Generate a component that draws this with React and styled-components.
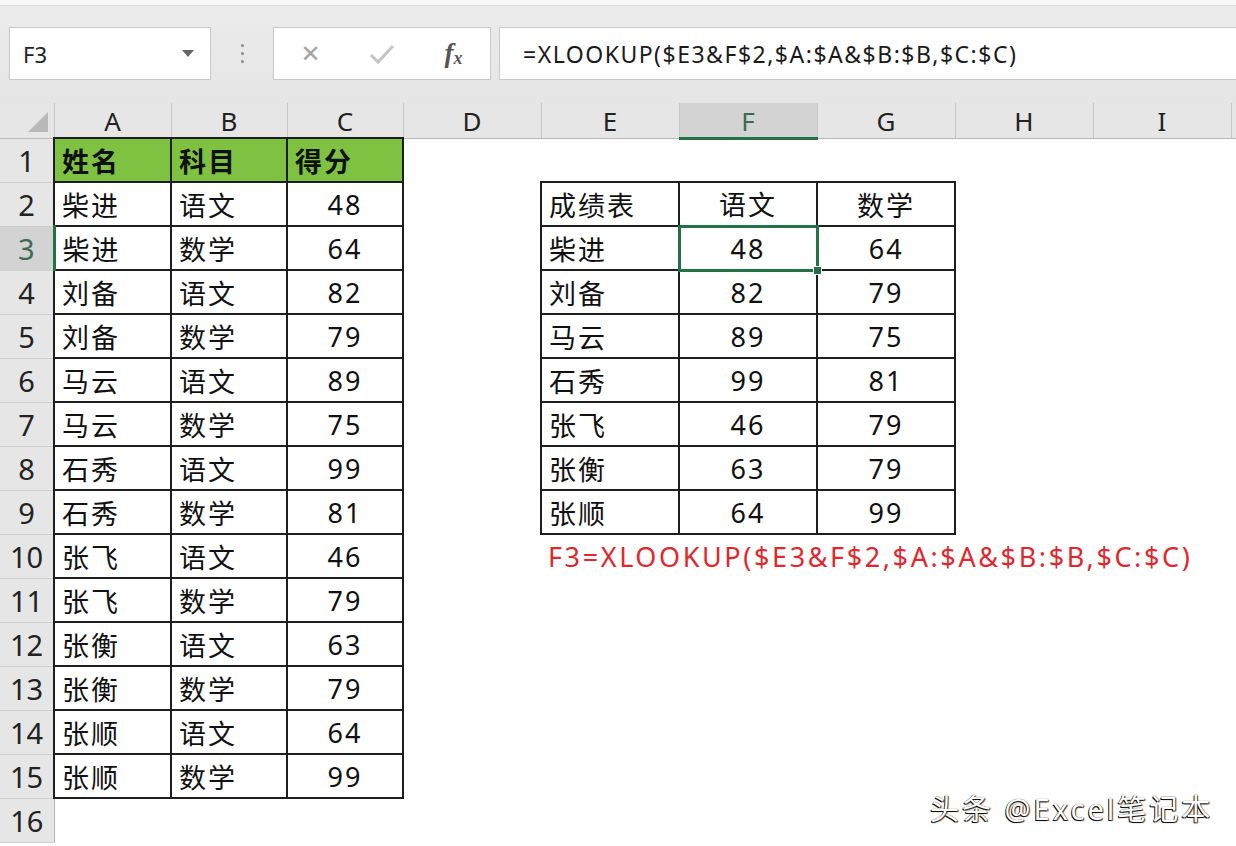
import React from 'react';
import styled, { createGlobalStyle } from 'styled-components';

const GlobalStyle = createGlobalStyle`
  html, body {
    margin: 0;
    padding: 0;
    background: #fff;
  }
  body {
    font-family: "Noto Sans", "Noto Sans CJK SC", sans-serif;
    overflow: hidden;
  }
`;

const GREEN = '#217346';

const columns = [
    { key: 'A', w: 117 },
    { key: 'B', w: 116 },
    { key: 'C', w: 116 },
    { key: 'D', w: 138 },
    { key: 'E', w: 138 },
    { key: 'F', w: 138 },
    { key: 'G', w: 138 },
    { key: 'H', w: 138 },
    { key: 'I', w: 138 },
    { key: '', w: 5 },
];

//left table A1:C15
const scores = [
    ['姓名', '科目', '得分'],
    ['柴进', '语文', 48],
    ['柴进', '数学', 64],
    ['刘备', '语文', 82],
    ['刘备', '数学', 79],
    ['马云', '语文', 89],
    ['马云', '数学', 75],
    ['石秀', '语文', 99],
    ['石秀', '数学', 81],
    ['张飞', '语文', 46],
    ['张飞', '数学', 79],
    ['张衡', '语文', 63],
    ['张衡', '数学', 79],
    ['张顺', '语文', 64],
    ['张顺', '数学', 99],
];

//right table E2:G9
const report = [
    ['成绩表', '语文', '数学'],
    ['柴进', 48, 64],
    ['刘备', 82, 79],
    ['马云', 89, 75],
    ['石秀', 99, 81],
    ['张飞', 46, 79],
    ['张衡', 63, 79],
    ['张顺', 64, 99],
];

const formula = '=XLOOKUP($E3&F$2,$A:$A&$B:$B,$C:$C)';

const App = () => {
    const rows = [];
    for (let r = 1; r <= 16; r++) {
        const cells = [];
        // A..C
        const left = scores[r - 1];
        for (let c = 0; c < 3; c++) {
            if (left) {
                cells.push(
                    <Cell key={'l' + c} $boxed $head={r === 1} $align={c === 2 && r > 1 ? 'center' : 'left'}>
                        {left[c]}
                    </Cell>
                );
            } else {
                cells.push(<Cell key={'l' + c} />);
            }
        }
        // D
        cells.push(<Cell key="d" />);
        // E..G
        const right = r >= 2 ? report[r - 2] : null;
        for (let c = 0; c < 3; c++) {
            if (right) {
                const selected = r === 3 && c === 1;
                cells.push(
                    <Cell key={'r' + c} $boxed $selected={selected} $align={c === 0 ? 'left' : 'center'}>
                        {right[c]}
                        {selected && <FillHandle />}
                    </Cell>
                );
            } else if (r === 10 && c === 0) {
                cells.push(<Note key="note">F3{formula}</Note>);
            } else {
                cells.push(<Cell key={'r' + c} />);
            }
        }
        // H, I, rest
        cells.push(<Cell key="h" />);
        cells.push(<Cell key="i" />);
        cells.push(<Cell key="j" />);

        rows.push(
            <Row key={r}>
                <RowHead $active={r === 3}>{r}</RowHead>
                {cells}
            </Row>
        );
    }

    return (
        <Page>
            <GlobalStyle />
            <Toolbar>
                <NameBox>
                    <span>F3</span>
                    <Caret />
                </NameBox>
                <Grip>
                    <i /><i /><i />
                </Grip>
                <FxBox>
                    <Cancel>✕</Cancel>
                    <Enter>
                        <svg width="26" height="22" viewBox="0 0 26 22">
                            <path d="M2 12 L9 19 L24 3" fill="none" stroke="#c4c4c4" strokeWidth="3" />
                        </svg>
                    </Enter>
                    <Fx>f<sub>x</sub></Fx>
                </FxBox>
                <FormulaBox>{formula}</FormulaBox>
            </Toolbar>

            <Sheet>
                <colgroup>
                    <col style={{ width: 54 }} />
                    {columns.map((c, i) => <col key={i} style={{ width: c.w }} />)}
                </colgroup>
                <thead>
                    <HeadRow>
                        <Corner><Triangle /></Corner>
                        {columns.map((c, i) => (
                            <ColHead key={i} $active={c.key === 'F'}>{c.key}</ColHead>
                        ))}
                    </HeadRow>
                </thead>
                <tbody>{rows}</tbody>
            </Sheet>

            <Watermark>头条 @Excel笔记本</Watermark>
        </Page>
    );
};

export default App;

const Page = styled.div`
width: 1236px;
height: 846px;
overflow: hidden;
position: relative;
background: #fff;
`;

const Toolbar = styled.div`
height: 103px;
box-sizing: border-box;
background: linear-gradient(#ebebeb, #e5e5e5);
border-top: 5px solid #f7f7f7;
box-shadow: inset 0 1px 0 #dadada;
display: flex;
align-items: flex-start;
padding: 22px 0 0 9px;
`;

const NameBox = styled.div`
width: 202px;
height: 53px;
box-sizing: border-box;
background: #fff;
border: 1px solid #c9c9c9;
display: flex;
align-items: center;
justify-content: space-between;
padding: 0 16px 0 13px;
font-size: 22px;
color: #222;
`;

const Caret = styled.span`
width: 0;
height: 0;
border-left: 6px solid transparent;
border-right: 6px solid transparent;
border-top: 7px solid #666;
`;

const Grip = styled.div`
width: 62px;
height: 53px;
display: flex;
flex-direction: column;
align-items: center;
justify-content: center;
gap: 5px;

i {
    width: 3px;
    height: 3px;
    border-radius: 50%;
    background: #8a8a8a;
}
`;

const FxBox = styled.div`
width: 218px;
height: 53px;
box-sizing: border-box;
background: #fff;
border: 1px solid #c9c9c9;
display: grid;
grid-template-columns: 73px 70px 73px;
align-items: center;
justify-items: center;
`;

const Cancel = styled.span`
font-size: 24px;
color: #a5a5a5;
font-family: "DejaVu Sans", sans-serif;
`;

const Enter = styled.span`
display: flex;
`;

const Fx = styled.span`
font-family: "Liberation Serif", serif;
font-style: italic;
font-weight: bold;
font-size: 27px;
color: #555;

sub {
    font-size: 18px;
    vertical-align: -2px;
}
`;

const FormulaBox = styled.div`
flex: 1;
height: 53px;
box-sizing: border-box;
margin-left: 8px;
margin-right: -12px;
background: #fff;
border: 1px solid #c9c9c9;
display: flex;
align-items: center;
padding-left: 23px;
font-size: 23px;
letter-spacing: 1.5px;
color: #1a1a1a;
`;

const Sheet = styled.table`
border-collapse: collapse;
table-layout: fixed;
width: 1236px;
`;

const HeadRow = styled.tr`
height: 35px;
line-height: 1;
`;

const Corner = styled.th`
padding: 0;
background: #e6e6e6;
border-right: 1px solid #c6c6c6;
border-bottom: 1px solid #b8b8b8;
vertical-align: bottom;
`;

const Triangle = styled.span`
display: block;
width: 0;
height: 0;
margin: 0 6px 6px auto;
border-left: 20px solid transparent;
border-bottom: 20px solid #b9b9b9;
`;

const ColHead = styled.th`
padding: 2px 0 0;
background: ${p => (p.$active ? '#d3d3d3' : '#e6e6e6')};
border-right: 1px solid #c8c8c8;
border-bottom: ${p => (p.$active ? `3px solid ${GREEN}` : '1px solid #b8b8b8')};
font-size: 26px;
font-weight: normal;
color: ${p => (p.$active ? '#3d6b50' : '#222')};
text-align: center;
`;

const Row = styled.tr`
height: 44px;
`;

const RowHead = styled.th`
padding: 0;
background: ${p => (p.$active ? '#d3d3d3' : '#e6e6e6')};
border-bottom: 1px solid #cfcfcf;
border-right: ${p => (p.$active ? `3px solid ${GREEN}` : '1px solid #b8b8b8')};
font-size: 29px;
font-weight: normal;
color: ${p => (p.$active ? '#3d6b50' : '#222')};
text-align: center;
`;

const Cell = styled.td`
position: relative;
padding: 0 7px;
font-size: 27px;
letter-spacing: 2px;
white-space: nowrap;
overflow: visible;
color: #111;
text-align: ${p => p.$align || 'left'};
background: ${p => (p.$head ? '#7fc241' : 'transparent')};
font-weight: ${p => (p.$head ? 'bold' : 'normal')};
border: ${p => (p.$selected ? `3px solid ${GREEN}` : p.$boxed ? '2px solid #1e1e1e' : 'none')};
`;

const FillHandle = styled.span`
position: absolute;
right: -6px;
bottom: -6px;
width: 7px;
height: 7px;
background: ${GREEN};
border: 1px solid #fff;
`;

const Note = styled.td`
padding: 0 7px;
font-size: 27px;
letter-spacing: 2.6px;
white-space: nowrap;
overflow: visible;
color: #e3262c;
`;

const Watermark = styled.div`
position: absolute;
left: 930px;
top: 786px;
font-size: 29px;
letter-spacing: 3px;
color: #fff;
text-shadow: -1px 1px 0 #111, 1px 1px 1px #333, 0 0 1px #222;
`;
